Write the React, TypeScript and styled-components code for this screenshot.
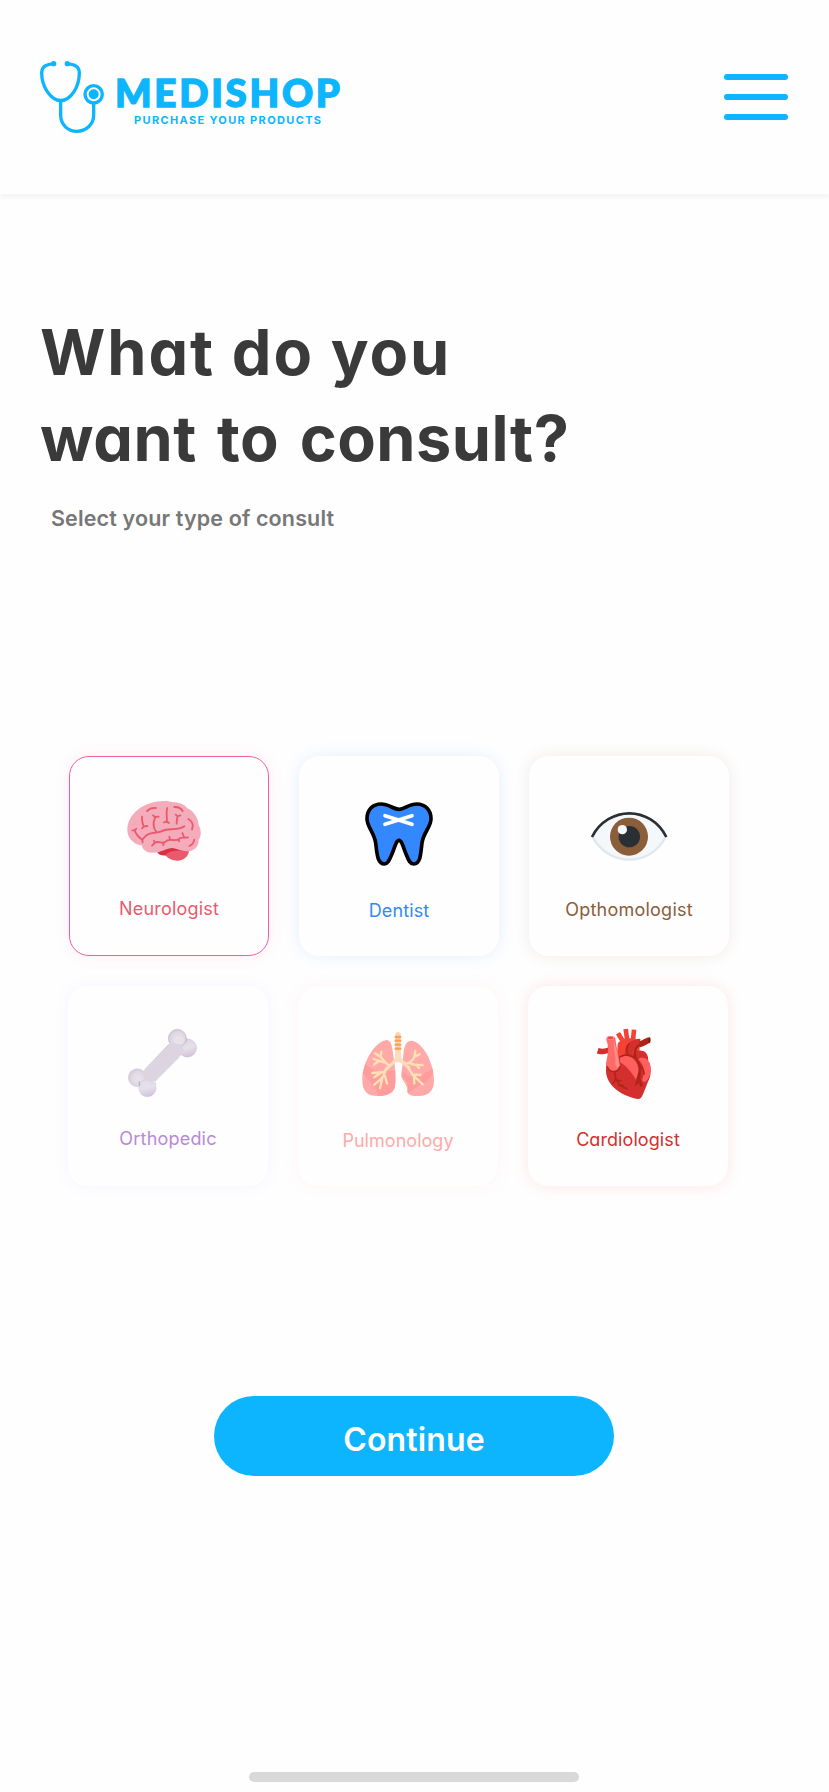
import React from "react";
import styled, { createGlobalStyle } from "styled-components";

const GlobalStyle = createGlobalStyle`
  * { box-sizing: border-box; }
  body { margin: 0; background: #fefefe; font-family: Inter, "Open Sans", sans-serif; font-feature-settings: "cv11" 1; }
  h1, p { margin: 0; }
`;

const Screen = styled.div`
  width: 829px;
  height: 1792px;
  display: flex;
  flex-direction: column;
  overflow: hidden;
`;

const Header = styled.header`
  height: 194px;
  flex: none;
  padding: 56px 41px 0 36px;
  display: flex;
  justify-content: space-between;
  align-items: flex-start;
  box-shadow: 0 4px 4px rgba(0, 0, 0, 0.04);
`;

const Brand = styled.div`
  display: flex;
  gap: 7px;
  color: #0db5ff;
`;

const BrandText = styled.div`
  padding-top: 15px;
  display: flex;
  flex-direction: column;
  white-space: nowrap;
`;

const BrandName = styled.span`
  font-family: Lato, sans-serif;
  font-size: 38.5px;
  font-weight: 900;
  line-height: 43px;
  letter-spacing: 2.7px;
  -webkit-text-stroke: 1.4px currentColor;
`;

const Tagline = styled.span`
  margin-left: 19px;
  font-size: 11px;
  font-weight: 700;
  line-height: 12px;
  letter-spacing: 1.35px;
`;

const MenuButton = styled.button`
  margin-top: 18px;
  padding: 0;
  border: 0;
  background: none;
  display: flex;
  flex-direction: column;
  gap: 14px;
`;

const MenuBar = styled.span`
  width: 64px;
  height: 6px;
  border-radius: 3px;
  background: #0db5ff;
`;

const Intro = styled.section`
  padding: 115px 0 0 40px;
  white-space: nowrap;
`;

const Title = styled.h1`
  font-size: 63px;
  font-weight: 700;
  line-height: 86px;
  color: #3a3a3a;
`;

const TitleLine = styled.span<{ $spacing: number; $wordSpacing: number }>`
  display: block;
  letter-spacing: ${(p) => p.$spacing}px;
  word-spacing: ${(p) => p.$wordSpacing}px;
`;

const Subtitle = styled.p`
  margin: 22px 0 0 11px;
  font-size: 21.5px;
  font-weight: 600;
  line-height: 30px;
  letter-spacing: 0.14px;
  color: #777;
`;

const Choices = styled.div`
  margin: 223px 0 0 68px;
  display: flex;
  flex-direction: column;
  gap: 30px;
`;

const ChoiceRow = styled.div<{ $shift?: number }>`
  display: flex;
  gap: 30px;
  margin-left: ${(p) => p.$shift ?? 0}px;
`;

const Card = styled.button<{ $glow: string; $selected?: boolean }>`
  width: 200px;
  height: 200px;
  padding: 0;
  flex: none;
  display: flex;
  flex-direction: column;
  align-items: center;
  font: inherit;
  font-feature-settings: inherit;
  border: none;
  outline: ${(p) => (p.$selected ? "1px solid #ef5da8" : "none")};
  outline-offset: -1px;
  border-radius: 20px;
  background: #fefefe;
  box-shadow: 0 0 15px ${(p) => p.$glow};
`;

const Icon = styled.svg`
  width: 90px;
  height: 90px;
  margin-top: 35px;
  flex: none;
`;

const Label = styled.span<{ $color: string; $drop: number; $spacing: number }>`
  margin-top: ${(p) => 16 + p.$drop}px;
  font-size: 18px;
  font-weight: 400;
  line-height: 24px;
  white-space: nowrap;
  color: ${(p) => p.$color};
  letter-spacing: ${(p) => p.$spacing}px;
`;

const Continue = styled.button`
  width: 400px;
  height: 80px;
  flex: none;
  margin: 210px 0 0 214px;
  padding: 7px 0 0;
  border: 0;
  border-radius: 40px;
  background: #0db5ff;
  color: #fff;
  font: inherit;
  font-feature-settings: inherit;
  font-size: 32px;
  font-weight: 600;
  letter-spacing: 0.15px;
`;

const HomeIndicator = styled.div`
  width: 330px;
  height: 10px;
  flex: none;
  margin: auto 0 10px 249px;
  border-radius: 5px;
  background: #d9d9d9;
`;

const LogoMark = styled.svg`
  width: 72px;
  height: 82px;
`;

const Stethoscope = () => (
  <LogoMark viewBox="48 48 216 246" fill="none" stroke="currentColor">
    <path strokeWidth="10" d="M101 71C84 73 65 76 65 99C65 139 91 181 122 181C154 181 178 139 178 99C178 76 159 73 141 71" />
    <path strokeWidth="5" d="M82 155C96 178 109 185 122 185C135 185 149 178 162 155" />
    <path strokeWidth="10" d="M122 183V226C122 254 144 274 170 274C198 274 221 254 221 226V190" />
    <g fill="currentColor" stroke="none">
      <circle cx="101" cy="71" r="8" />
      <circle cx="142" cy="71" r="8" />
      <circle cx="221" cy="163" r="15" />
    </g>
    <circle cx="221" cy="163" r="26" strokeWidth="10" />
  </LogoMark>
);

const Brain = () => (
  <Icon viewBox="222 153 270 270" fill="none" strokeLinecap="round" strokeLinejoin="round">
    <path fill="#dd2e44" d="M322 337C338 331 349 320 369 320L418 334L350 346C339 348 326 346 322 337Z" />
    <path fill="#ea596e" d="M346 346C358 329 393 331 417 333C415 351 399 362 382 362C366 362 353 355 346 346Z" />
    <path fill="#f4abba" d="M232 268C233 222 280 183 345 183C354 183 361 185 368 187C386 186 403 193 412 205C430 212 445 234 446 256C455 270 454 289 446 300C446 320 433 333 416 334C399 334 384 328 368 324C349 325 331 339 305 338C287 338 277 327 275 316C250 314 231 293 232 268Z" />
    <path
      stroke="#ea596e"
      strokeWidth="5.5"
      d="M291 213Q302 202 318 204M373 201Q391 200 398 213M276 230C276 244 277 252 282 260M276 265L282 259L292 258M309 226L315 231L326 230M315 232C309 248 309 264 319 275M352 204C345 220 354 232 350 246M342 247L350 244L357 249M377 224L383 229L391 226M383 230C379 238 380 246 380 251M415 237Q434 248 426 268M247 271L254 271L259 266M254 272C260 286 268 294 277 299L278 307M278 298C293 274 318 280 332 275C353 262 383 274 403 259M306 317L314 309L312 302M314 308C328 301 336 313 345 306C357 292 374 306 386 298C390 290 401 295 414 292M340 315V309M360 298L358 290M387 304L386 299M402 291L397 279M433 299Q430 314 418 318"
    />
  </Icon>
);

const Tooth = () => (
  <Icon viewBox="222 153 270 270" strokeLinecap="round" strokeLinejoin="round">
    <path
      fill="#3388ff"
      stroke="#000"
      strokeWidth="11"
      d="M357 208C340 208 327 192 303 192C278 192 261 210 261 236C261 261 282 276 287 308C291 341 292 372 313 372C325 372 330 355 336 342C343 326 348 301 357 301C366 301 371 326 378 342C384 355 388 372 401 372C422 372 422 341 426 308C431 276 453 261 453 236C453 210 435 192 410 192C387 192 374 208 357 208Z"
    />
    <path fill="none" stroke="#fff" strokeWidth="11" d="M315 227L396 253M396 227L315 253" />
  </Icon>
);

const Eye = () => (
  <Icon viewBox="222 153 270 270" fill="none" strokeLinecap="round">
    <path fill="#f5f8fa" d="M246 290C273 242 315 220 358 220C401 220 442 242 469 290C442 337 401 359 358 359C315 359 273 337 246 290Z" />
    <path stroke="#e1e8ed" strokeWidth="7" d="M247 290C273 337 315 359 358 359C401 359 442 337 468 290" />
    <path stroke="#292f33" strokeWidth="8" strokeLinecap="butt" d="M246 291C270 243 315 220 358 220C401 220 445 243 469 291" />
    <circle cx="357" cy="290" r="57" fill="#8a5d3b" />
    <circle cx="358" cy="290" r="32" fill="#292f33" />
    <circle cx="337" cy="269" r="14" fill="#f5f8fa" />
  </Icon>
);

const Bone = () => (
  <Icon viewBox="219 153 270 270">
    <defs>
      <linearGradient id="knob" x1="0.3" y1="0" x2="0.55" y2="1">
        <stop offset="0" stopColor="#dcd5e1" />
        <stop offset="0.5" stopColor="#e5e1e9" />
        <stop offset="1" stopColor="#d2c2e0" />
      </linearGradient>
      <radialGradient id="knobShine" cx="0.55" cy="0.55" r="0.6">
        <stop offset="0" stopColor="#e8e5ea" />
        <stop offset="0.65" stopColor="#dfd8e4" />
        <stop offset="1" stopColor="#cfc3d7" />
      </radialGradient>
    </defs>
    <circle cx="412" cy="234" r="27" fill="url(#knob)" stroke="#b9aebd" strokeWidth="1.5" />
    <circle cx="262" cy="323" r="27" fill="url(#knobShine)" stroke="#c2b4ca" strokeWidth="1" />
    <circle cx="382" cy="205" r="27" fill="url(#knobShine)" stroke="#b9aebd" strokeWidth="1.5" />
    <circle cx="292" cy="354" r="26" fill="url(#knob)" stroke="#c5b5d0" strokeWidth="1" />
    <path fill="#dcd4e1" d="M357 221L284 300C274 309 283 332 302 337L315 333L389 259C404 250 402 225 389 215Z" />
    <path fill="none" stroke="#bbb1c0" strokeWidth="1.5" d="M357 223L283 299M389 260L316 333Q314 337 317 343M408 218Q412 211 409 202" />
    <path fill="none" stroke="#9f94a5" strokeWidth="3" opacity="0.65" d="M268 334Q266 341 269 348" />
    <ellipse cx="387" cy="211" rx="15" ry="12" fill="#e6e2e8" />
    <ellipse cx="287" cy="342" rx="13" ry="10" fill="#e5dfea" />
  </Icon>
);

const Lungs = () => (
  <Icon viewBox="219 153 270 270" fill="none" strokeLinecap="round" strokeLinejoin="round">
    <defs>
      <clipPath id="lobes">
        <path d="M247 326C248 278 284 213 321 210C338 212 337 242 342 270C346 298 349 333 344 354C338 371 321 378 297 378C263 379 246 365 247 326Z" />
        <path d="M369 270C370 239 374 213 393 212C426 213 463 278 462 331C462 363 446 378 417 378C396 379 383 376 382 363C384 344 370 337 364 320C364 301 368 292 369 270Z" />
      </clipPath>
    </defs>
    <g clipPath="url(#lobes)">
      <path fill="#ffa9a9" d="M240 200H470V385H240Z" />
      <path fill="#ff9999" opacity="0.7" d="M256 280C280 310 310 306 348 301V350C335 371 315 378 295 378C287 350 262 326 247 309Z" />
      <path fill="#ff9999" opacity="0.7" d="M364 300C390 337 430 315 464 291C452 341 421 339 382 371Z" />
      <path fill="#f9c79c" d="M362 316C371 324 378 338 382 371C387 351 380 331 368 323Z" />
    </g>
    <path stroke="#fbd3b7" strokeWidth="16" d="M354 194V260" />
    <path fill="#fddcbb" d="M346 246H363V262C368 270 381 281 392 291L386 300C374 287 362 276 354 276C345 276 334 291 319 303L313 296C328 283 344 271 346 259Z" />
    <path stroke="#ffe1b6" strokeWidth="7" d="M329 286C317 283 310 268 301 260L285 250M302 261L304 245M312 277L281 267M297 273L282 284M323 295L311 306L277 309M305 307L283 322M316 303C311 324 299 330 283 344M308 320L300 354M315 318L321 340M376 280C392 282 397 270 403 262L406 243M403 260L419 253M390 280C408 287 416 286 428 285M408 285L417 294M385 293L397 313L422 315M397 313L428 343M402 319L403 340" />
    <path stroke="#f3a258" strokeWidth="7" d="M347 201H361M347 212H361M347 224H361M347 236H361" />
  </Icon>
);

const Heart = () => (
  <Icon viewBox="219 153 270 270" fill="none" strokeLinecap="butt" strokeLinejoin="round">
    <path stroke="#d32f2f" strokeWidth="17" d="M263 242Q286 249 306 236" />
    <path stroke="#f44336" strokeWidth="14" d="M324 190L340 216M347 177L352 213M372 179L369 213" />
    <path fill="#f44336" d="M323 222C330 207 347 203 366 205L391 214L388 246L355 275L320 270Z" />
    <path stroke="#d32f2f" strokeWidth="24" d="M357 260C352 231 370 218 391 218" />
    <path fill="#d32f2f" d="M303 278C316 255 350 253 367 258C372 242 388 238 402 244C414 251 416 267 414 275C424 287 425 312 416 331C408 349 401 374 392 385C386 391 367 383 351 377C320 365 288 337 288 302L289 278Z" />
    <path fill="#ff5f5f" d="M330 264C344 253 365 259 375 272C386 286 391 307 379 331C368 311 350 288 330 276Z" />
    <path fill="#ff5f5f" d="M384 268C396 259 411 265 417 275C426 290 424 316 411 331C402 340 397 336 397 326C407 306 401 282 384 268Z" />
    <path fill="#ff6b68" d="M289 209C288 198 307 194 316 204C319 230 326 260 330 287C327 306 298 311 289 289C285 268 303 246 289 209Z" />
    <path fill="#ff8f89" d="M312 211C317 234 324 250 328 287C324 297 319 291 316 282C320 257 308 235 312 211Z" />
    <ellipse cx="301" cy="204" rx="10" ry="5" fill="#ee4440" stroke="#ff8f89" strokeWidth="3" />
    <path stroke="#ae2517" strokeWidth="18" strokeLinejoin="round" d="M389 223C397 222 406 214 418 210" />
    <path stroke="#ae2517" strokeWidth="7" strokeLinecap="round" d="M400 220C377 226 371 243 376 260C382 276 392 280 390 296C391 313 379 319 383 338" />
    <path stroke="#ae2517" strokeWidth="4.5" strokeLinecap="round" d="M354 254C347 239 350 229 357 221M331 260C349 250 368 258 378 266M292 290C300 310 324 309 329 291M314 306C316 329 326 350 351 356M317 323Q315 337 308 341M321 330L334 333M326 347L340 346M391 288Q403 297 402 313M390 306C390 325 388 339 392 348M390 330L398 347M386 322L377 345" />
    <ellipse cx="418" cy="210" rx="4" ry="9" fill="#8d1c12" />
  </Icon>
);

type Specialty = { name: string; color: string; glow: string; drop: number; spacing: number; Art: React.FC };

const specialties: Specialty[][] = [
  [
    { name: "Neurologist", color: "#ea596e", glow: "rgba(234,89,110,.10)", drop: 0, spacing: 0.2, Art: Brain },
    { name: "Dentist", color: "#3388ff", glow: "rgba(51,136,255,.13)", drop: 2, spacing: 0.1, Art: Tooth },
    { name: "Opthomologist", color: "#8a5d3b", glow: "rgba(138,93,59,.11)", drop: 1, spacing: 0.24, Art: Eye },
  ],
  [
    { name: "Orthopedic", color: "#b78ad6", glow: "rgba(150,110,255,.08)", drop: 0, spacing: 0.2, Art: Bone },
    { name: "Pulmonology", color: "#ffa9a9", glow: "rgba(255,140,140,.09)", drop: 2, spacing: 0.04, Art: Lungs },
    { name: "Cardiologist", color: "#d32f2f", glow: "rgba(244,60,60,.13)", drop: 1, spacing: 0.08, Art: Heart },
  ],
];

export default function App() {
  return (
    <Screen>
      <GlobalStyle />
      <Header>
        <Brand>
          <Stethoscope />
          <BrandText>
            <BrandName>MEDISHOP</BrandName>
            <Tagline>PURCHASE YOUR PRODUCTS</Tagline>
          </BrandText>
        </Brand>
        <MenuButton aria-label="Menu">
          <MenuBar />
          <MenuBar />
          <MenuBar />
        </MenuButton>
      </Header>
      <Intro>
        <Title>
          <TitleLine $spacing={1.9} $wordSpacing={0}>What do you</TitleLine>
          <TitleLine $spacing={0.5} $wordSpacing={5}>want to consult?</TitleLine>
        </Title>
        <Subtitle>Select your type of consult</Subtitle>
      </Intro>
      <Choices>
        {specialties.map((row, i) => (
          <ChoiceRow key={i} $shift={i === 0 ? 1 : 0}>
            {row.map(({ name, color, glow, drop, spacing, Art }) => (
              <Card key={name} $glow={glow} $selected={name === "Neurologist"}>
                <Art />
                <Label $color={color} $drop={drop} $spacing={spacing}>
                  {name}
                </Label>
              </Card>
            ))}
          </ChoiceRow>
        ))}
      </Choices>
      <Continue>Continue</Continue>
      <HomeIndicator />
    </Screen>
  );
}
